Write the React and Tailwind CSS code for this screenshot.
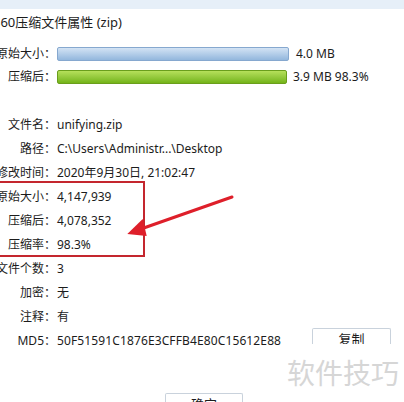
import React from "react";

const rows = [
  ["文件名：", "unifying.zip"],
  ["路径：", "C:\\Users\\Administr...\\Desktop"],
  ["修改时间：", "2020年9月30日, 21:02:47"],
  ["原始大小：", "4,147,939"],
  ["压缩后：", "4,078,352"],
  ["压缩率：", "98.3%"],
  ["文件个数：", "3"],
  ["加密：", "无"],
  ["注释：", "有"],
];

function Label({ children }) {
  return (
    <div className="flex justify-end w-[56px] shrink-0 whitespace-nowrap">
      <span>{children}</span>
    </div>
  );
}

export default function App() {
  return (
    <div
      className="relative w-[404px] h-[402px] overflow-hidden bg-white text-[12px] text-[#1c1c1c]"
      style={{ fontFamily: '"Noto Sans", "Noto Sans CJK SC", sans-serif' }}
    >
      <div className="h-[9px] bg-[#e6eff8]" />
      <div className="h-[26px] leading-[26px] text-[13px] ml-[-7px] whitespace-nowrap">360压缩文件属性 (zip)</div>

      {/* size bars */}
      <div className="mt-[7px] flex items-center h-[23px]">
        <Label>原始大小：</Label>
        <div className="ml-[1px] w-[232px] h-[14px] rounded-[2px] border border-[#86a8cf] bg-gradient-to-b from-[#d3e3f4] to-[#93b7dd]" />
        <span className="ml-[7px]">4.0 MB</span>
      </div>
      <div className="flex items-center h-[23px]">
        <Label>压缩后：</Label>
        <div className="ml-[1px] w-[230px] h-[14px] rounded-[2px] border border-[#6a9e1c] bg-gradient-to-b from-[#b6e05a] to-[#74b416]" />
        <span className="ml-[6px]">3.9 MB 98.3%</span>
      </div>

      {/* details */}
      <div className="mt-[25px] flex flex-col">
        {rows.map(([k, v]) => (
          <div key={k} className="flex items-center h-[24px]">
            <Label>{k}</Label>
            <span className="ml-[1px] whitespace-nowrap">{v}</span>
          </div>
        ))}
        <div className="flex items-start h-[24px]">
          <div className="flex items-center h-[24px]">
            <Label>MD5：</Label>
            <span className="ml-[1px] whitespace-nowrap tracking-[0.12px]">50F51591C1876E3CFFB4E80C15612E88</span>
          </div>
          <div className="ml-auto mr-[13px] mt-[-1px] w-[79px] h-[16px] overflow-hidden border-t border-x border-[#c9d2dc] rounded-t-[2px] flex justify-center">
            <span className="leading-[21px] text-[13px]">复制</span>
          </div>
        </div>
      </div>

      <div className="mt-[40px] ml-[165px] w-[78px] h-[12px] overflow-hidden border-t border-x border-[#c9d2dc] rounded-t-[2px] flex justify-center">
        <span className="leading-[21px] text-[13px]">确定</span>
      </div>

      {/* annotation */}
      <div className="absolute left-[-2px] top-[181px] w-[147px] h-[76px] border-2 border-[#c4262e]" />
      <svg className="absolute left-0 top-0" width="404" height="402">
        <line x1="232" y1="197" x2="138" y2="230" stroke="#de1f2a" strokeWidth="3" strokeLinecap="round" />
        <polygon points="142.7,219 127.3,234 146.7,236" fill="#de1f2a" />
      </svg>

      {/* watermark */}
      <div className="absolute left-[287px] top-[353px] text-[28px] leading-[40px] text-[#d6d6d6] whitespace-nowrap">软件技巧</div>
    </div>
  );
}
